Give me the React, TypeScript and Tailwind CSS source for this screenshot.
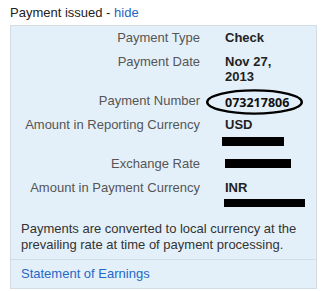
import React from "react";

const rows: { label: string; value: React.ReactNode }[] = [];

export default function App() {
  return (
    <div
      className="relative w-[322px] h-[291px] bg-white overflow-hidden text-[13px] leading-[15px]"
      style={{ fontFamily: '"Liberation Sans", Arial, sans-serif' }}
    >
      <div className="pl-[10px] pt-[5px] h-[25px] text-[#222]">
        Payment issued - <span className="text-[#1f64c4]">hide</span>
      </div>
      <div className="ml-[10px] w-[307px] border border-[#d3dce3] bg-[#e4f0f9]">
        <div className="pt-[4px] grid grid-cols-[189px_70px] gap-x-[25px] gap-y-[9px]">
          <div className="text-right text-[#555]">Payment Type</div>
          <div className="font-bold text-[#222]">Check</div>

          <div className="text-right text-[#555]">Payment Date</div>
          <div className="font-bold text-[#222]">Nov 27, 2013</div>

          <div className="text-right text-[#555]">Payment Number</div>
          <div
            className="h-[15px] pt-[2px] font-bold text-[12.5px] text-[#111] whitespace-nowrap"
            style={{ fontFamily: '"Open Sans", sans-serif' }}
          >
            073217806
          </div>

          <div className="text-right text-[#555] whitespace-nowrap">Amount in Reporting Currency</div>
          <div className="font-bold text-[#222]">
            <div>USD</div>
            <div className="h-[15px] pt-[5px]">
              <div className="ml-[-3px] w-[62px] h-[9px] bg-black" />
            </div>
          </div>

          <div className="text-right text-[#555]">Exchange Rate</div>
          <div className="h-[15px] pt-[3px]">
            <div className="w-[66px] h-[9px] bg-black" />
          </div>

          <div className="text-right text-[#555] whitespace-nowrap">Amount in Payment Currency</div>
          <div className="font-bold text-[#222]">
            <div>INR</div>
            <div className="h-[15px] pt-[4px]">
              <div className="ml-[-1px] w-[81px] h-[8px] bg-black" />
            </div>
          </div>
        </div>
        <p className="mt-[11px] px-[10px] pb-[6px] leading-[16px] text-[#333]">
          Payments are converted to local currency at the prevailing rate at time of payment processing.
        </p>
        <div className="border-t border-[#d3dce3] px-[10px] pt-[6px] pb-[7px] text-[#2468c6]">
          Statement of Earnings
        </div>
      </div>
      <svg
        className="absolute left-[205px] top-[88px]"
        width="99"
        height="28"
        viewBox="0 0 99 28"
      >
        <ellipse cx="49.5" cy="14" rx="47.3" ry="11.6" fill="none" stroke="#000" strokeWidth="2.4" />
      </svg>
    </div>
  );
}
